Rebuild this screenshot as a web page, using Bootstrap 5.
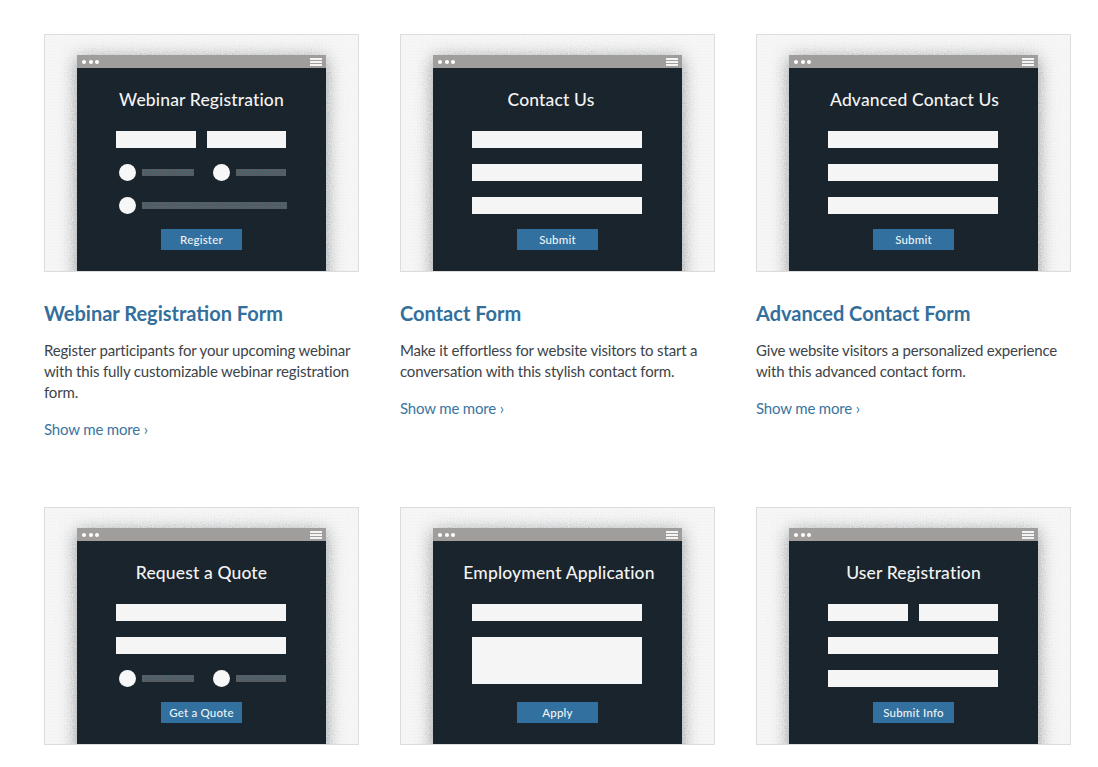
<!DOCTYPE html>
<html lang="en">
<head>
<meta charset="utf-8">
<title>Form templates</title>
<link href="https://cdn.jsdelivr.net/npm/bootstrap@5.3.0/dist/css/bootstrap.min.css" rel="stylesheet">
<style>
body{font-family:"Lato","Liberation Sans",sans-serif;background:#fff}
.page-wrap{padding:34px 27px 0 44px}
.tpl-row{--bs-gutter-x:41px;--bs-gutter-y:0}
.tpl-entry-top{height:473px}
.thumb{height:238px;background-color:#f6f6f6;background-image:radial-gradient(#f0f0f0 30%,transparent 36%);background-size:3px 3px;border:1px solid #dcdcdc;overflow:hidden;position:relative}
.shade{position:absolute;left:32px;top:23px;width:249px;height:250px;background:#94989b;filter:blur(9px) url(#speckle)}
.winframe{position:absolute;left:32px;top:20px;width:249px;height:216px;background:#1a242c;color:#f3f3f3}
.winbar{height:13px;background:#a09e9c;padding:0 4px 0 5px;gap:2.5px}
.dot3{width:4px;height:4px;border-radius:50%;background:#fff}
.burger{width:12px;height:8px;border-top:2px solid #f4f4f4;border-bottom:2px solid #f4f4f4;position:relative}
.burger::after{content:"";position:absolute;left:0;right:0;top:1px;height:2px;background:#f4f4f4}
.wintitle{height:63px;padding-top:20px;font-size:17.5px;line-height:24px;font-weight:500;letter-spacing:.15px;white-space:nowrap}
.shift-contact{padding-right:13px}
.shift-adv{padding-left:2px}
.shift-emp{padding-left:3px}
.fbody{width:170px;margin-left:39px}
.ffield{height:17px;background:#f5f5f5}
.fgap{gap:16px}
.half-gap{gap:11px}
.ftall{height:47px}
.radio-dot{width:17px;height:17px;border-radius:50%;background:#f7f7f7;flex:none;margin-left:3px}
.radio-line{height:7px;background-color:#565d61;background-image:radial-gradient(#3f6f90 35%,transparent 42%);background-size:3px 3px;margin-left:6px;flex:1}
.line-out{margin-right:-1px}
.radio-one{width:94px}
.radio-two{width:76px}
.fbtn{width:81px;height:21px;background:#31709f;color:#f0f3f5;font-size:11.5px;line-height:21px;font-weight:500;letter-spacing:.2px;text-align:center;margin:15px 0 0 45px}
.fbtn-late{margin-top:18px}
.tpl-head{font-size:20px;line-height:24px;font-weight:700;color:#336f9c;margin:29px 0 0}
.tpl-text{font-size:15px;line-height:21px;color:#3d4349;margin:15px 0 0;letter-spacing:-.17px}
.tpl-link{display:inline-block;font-size:15px;line-height:21px;color:#3a749f;margin-top:16px;text-decoration:none;letter-spacing:-.17px}
</style>
</head>
<body>
<svg width="0" height="0" class="position-absolute" aria-hidden="true"><defs>
<filter id="speckle" x="-25%" y="-25%" width="150%" height="150%"><feTurbulence type="fractalNoise" baseFrequency="0.9" numOctaves="2" seed="4" result="n"/><feDisplacementMap in="SourceGraphic" in2="n" scale="12" xChannelSelector="R" yChannelSelector="G"/></filter>
</defs></svg>
<main class="page-wrap">
<div class="row tpl-row">

<div class="col-4 tpl-entry-top">
<div class="thumb"><div class="shade"></div><div class="winframe">
<div class="winbar d-flex align-items-center"><span class="dot3"></span><span class="dot3"></span><span class="dot3"></span><span class="burger ms-auto"></span></div>
<div class="wintitle text-center">Webinar Registration</div>
<div class="fbody">
<div class="d-flex flex-column fgap">
<div class="d-flex half-gap"><div class="ffield flex-fill"></div><div class="ffield flex-fill"></div></div>
<div class="d-flex"><div class="d-flex align-items-center radio-one"><span class="radio-dot"></span><span class="radio-line me-3"></span></div><div class="d-flex align-items-center radio-two"><span class="radio-dot"></span><span class="radio-line"></span></div></div>
<div class="d-flex align-items-center"><span class="radio-dot"></span><span class="radio-line line-out"></span></div>
</div>
<div class="fbtn">Register</div>
</div>
</div></div>
<h2 class="tpl-head">Webinar Registration Form</h2>
<p class="tpl-text">Register participants for your upcoming webinar with this fully customizable webinar registration form.</p>
<a class="tpl-link" href="#">Show me more ›</a>
</div>

<div class="col-4 tpl-entry-top">
<div class="thumb"><div class="shade"></div><div class="winframe">
<div class="winbar d-flex align-items-center"><span class="dot3"></span><span class="dot3"></span><span class="dot3"></span><span class="burger ms-auto"></span></div>
<div class="wintitle text-center shift-contact">Contact Us</div>
<div class="fbody">
<div class="d-flex flex-column fgap"><div class="ffield"></div><div class="ffield"></div><div class="ffield"></div></div>
<div class="fbtn">Submit</div>
</div>
</div></div>
<h2 class="tpl-head">Contact Form</h2>
<p class="tpl-text">Make it effortless for website visitors to start a conversation with this stylish contact form.</p>
<a class="tpl-link" href="#">Show me more ›</a>
</div>

<div class="col-4 tpl-entry-top">
<div class="thumb"><div class="shade"></div><div class="winframe">
<div class="winbar d-flex align-items-center"><span class="dot3"></span><span class="dot3"></span><span class="dot3"></span><span class="burger ms-auto"></span></div>
<div class="wintitle text-center shift-adv">Advanced Contact Us</div>
<div class="fbody">
<div class="d-flex flex-column fgap"><div class="ffield"></div><div class="ffield"></div><div class="ffield"></div></div>
<div class="fbtn">Submit</div>
</div>
</div></div>
<h2 class="tpl-head">Advanced Contact Form</h2>
<p class="tpl-text">Give website visitors a personalized experience with this advanced contact form.</p>
<a class="tpl-link" href="#">Show me more ›</a>
</div>

<div class="col-4">
<div class="thumb"><div class="shade"></div><div class="winframe">
<div class="winbar d-flex align-items-center"><span class="dot3"></span><span class="dot3"></span><span class="dot3"></span><span class="burger ms-auto"></span></div>
<div class="wintitle text-center">Request a Quote</div>
<div class="fbody">
<div class="d-flex flex-column fgap">
<div class="ffield"></div><div class="ffield"></div>
<div class="d-flex"><div class="d-flex align-items-center radio-one"><span class="radio-dot"></span><span class="radio-line me-3"></span></div><div class="d-flex align-items-center radio-two"><span class="radio-dot"></span><span class="radio-line"></span></div></div>
</div>
<div class="fbtn">Get a Quote</div>
</div>
</div></div>
</div>

<div class="col-4">
<div class="thumb"><div class="shade"></div><div class="winframe">
<div class="winbar d-flex align-items-center"><span class="dot3"></span><span class="dot3"></span><span class="dot3"></span><span class="burger ms-auto"></span></div>
<div class="wintitle text-center shift-emp">Employment Application</div>
<div class="fbody">
<div class="d-flex flex-column fgap"><div class="ffield"></div><div class="ffield ftall"></div></div>
<div class="fbtn fbtn-late">Apply</div>
</div>
</div></div>
</div>

<div class="col-4">
<div class="thumb"><div class="shade"></div><div class="winframe">
<div class="winbar d-flex align-items-center"><span class="dot3"></span><span class="dot3"></span><span class="dot3"></span><span class="burger ms-auto"></span></div>
<div class="wintitle text-center">User Registration</div>
<div class="fbody">
<div class="d-flex flex-column fgap">
<div class="d-flex half-gap"><div class="ffield flex-fill"></div><div class="ffield flex-fill"></div></div>
<div class="ffield"></div><div class="ffield"></div>
</div>
<div class="fbtn">Submit Info</div>
</div>
</div></div>
</div>

</div>
</main>
<script src="https://cdn.jsdelivr.net/npm/bootstrap@5.3.0/dist/js/bootstrap.bundle.min.js"></script>
</body>
</html>
